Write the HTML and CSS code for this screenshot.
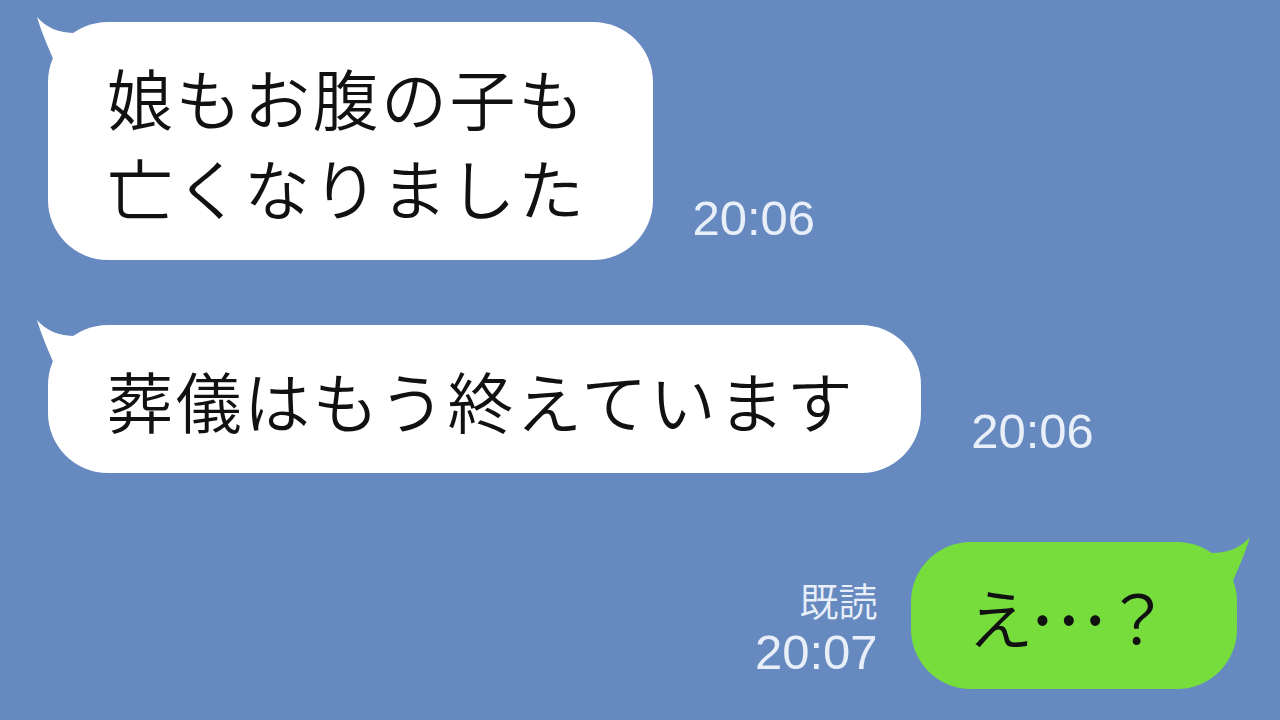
FILE: index.html
```html
<!DOCTYPE html>
<html>
  <head>
    <meta charset="utf-8">
    <title>トーク</title>
    <link rel="stylesheet" href="styles.css">
  </head>
  <body>
    <div class="talk">
      <div class="row row-in">
        <div class="bubble bubble-in">
          <svg class="tail" width="60" height="60" viewBox="0 0 60 60">
            <path d="M1 1 C10 12 25 18 44 17 L44 50 L18 45 C14 35 6 18 1 1 Z"/>
          </svg>
          <p>娘もお腹の子も<br>亡くなりました</p>
        </div>
        <div class="time time-first">20:06</div>
      </div>

      <div class="row row-in">
        <div class="bubble bubble-in">
          <svg class="tail" width="60" height="60" viewBox="0 0 60 60">
            <path d="M1 1 C10 12 25 18 44 17 L44 50 L18 45 C14 35 6 18 1 1 Z"/>
          </svg>
          <p>葬儀はもう終えています</p>
        </div>
        <div class="time time-wide">20:06</div>
      </div>

      <div class="row row-out">
        <div class="meta">
          <div class="read">既読</div>
          <div class="time">20:07</div>
        </div>
        <div class="bubble bubble-out">
          <svg class="tail" width="60" height="60" viewBox="0 0 60 60">
            <path d="M1 1 C10 12 25 18 44 17 L44 50 L18 45 C14 35 6 18 1 1 Z"/>
          </svg>
          <p>え<span class="dots">…</span>？</p>
        </div>
      </div>
    </div>
  </body>
</html>
```

FILE: styles.css
```css
html, body {
  margin: 0;
  padding: 0;
}
body {
  width: 1280px;
  height: 720px;
  overflow: hidden;
  background: #6689bf;
  font-family: "Noto Sans CJK JP", "Noto Sans", sans-serif;
}
.talk {
  display: flex;
  flex-direction: column;
  gap: 65px;
  padding: 22px 43px 0 48px;
}
.row {
  display: flex;
  align-items: flex-end;
}
.row-out {
  justify-content: flex-end;
  margin-top: 4px;
}

.bubble {
  position: relative;
  border-radius: 60px;
  padding: 29px 66px 29px 59px;
}
.bubble p {
  margin: 0;
  font-size: 66px;
  font-weight: 350;
  line-height: 90px;
  letter-spacing: 2.5px;
  color: #111;
  white-space: nowrap;
}
.bubble-in {
  background: #fff;
}
.bubble-out {
  background: #76dd3d;
  padding: 28px 64px 29px 57px;
}
.dots {
  display: inline-block;
  transform: scale(1.2, 1.3);
}

.tail {
  position: absolute;
  left: -12px;
  top: -6px;
  fill: #fff;
}
.bubble-out .tail {
  left: auto;
  right: -14px;
  fill: #76dd3d;
  transform: scaleX(-1);
}

.time {
  font-family: "Liberation Sans", Arial, sans-serif;
  font-size: 49px;
  line-height: 49px;
  color: #e8eff9;
}
.row-in .time {
  margin-bottom: 17px;
}
.time-first {
  margin-left: 40px;
}
.time-wide {
  margin-left: 50px;
}
.meta {
  display: flex;
  flex-direction: column;
  align-items: flex-end;
  gap: 9px;
  margin: 0 33px 12px 0;
}
.read {
  font-size: 39px;
  font-weight: 350;
  line-height: 39px;
  color: #e8eff9;
}
```
